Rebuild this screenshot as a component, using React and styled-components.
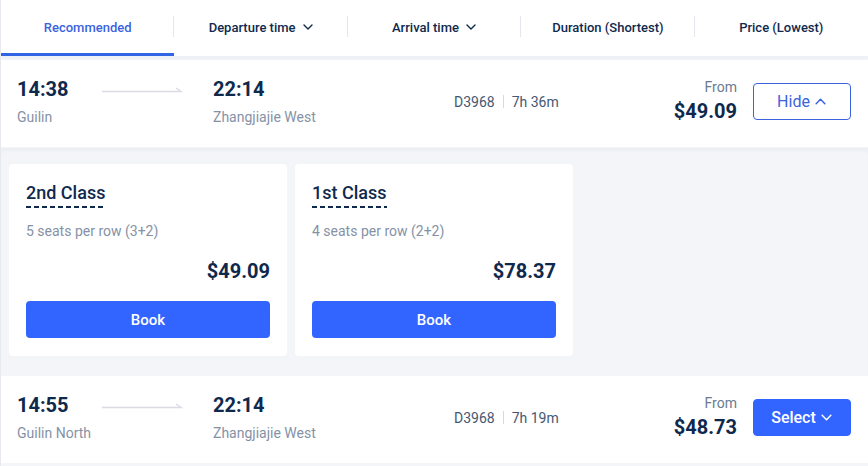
import React from "react";
import styled, { createGlobalStyle } from "styled-components";

const Global = createGlobalStyle`
  html, body { margin: 0; padding: 0; background: #f3f5f9; }
  body { font-family: Roboto, "Noto Sans", Arial, sans-serif; color: #0f294d; }
  * { box-sizing: border-box; }
`;

const Page = styled.div`
  width: 868px;
  height: 466px;
  background: #f3f5f9;
  border-left: 1px solid #e6e9ee;
  overflow: hidden;
`;

const Tabs = styled.div`
  display: grid;
  grid-template-columns: repeat(5, 1fr);
  height: 56px;
  background: #fff;
  box-shadow: 0 2px 4px rgba(15, 41, 77, 0.04);
`;

const Tab = styled.div`
  position: relative;
  display: flex;
  align-items: center;
  justify-content: center;
  gap: 6px;
  padding-top: 1px;
  font-size: 13px;
  font-weight: 500;
  color: ${(p) => (p.$active ? "#3b63dd" : "#0f294d")};
  border-bottom: 3px solid ${(p) => (p.$active ? "#3264e6" : "transparent")};
  &::after {
    content: "";
    display: ${(p) => (p.$last ? "none" : "block")};
    position: absolute;
    right: 0;
    top: 16px;
    height: 21px;
    width: 1px;
    background: #e4e7ec;
  }
`;

const Row = styled.div`
  display: flex;
  align-items: center;
  height: 87px;
  margin-top: ${(p) => p.$mt}px;
  background: #fff;
  padding: 0 17px 0 16px;
`;

const Point = styled.div`
  display: flex;
  flex-direction: column;
  gap: 7px;
  width: ${(p) => p.$w}px;
  white-space: nowrap;
  margin-top: -4px;
`;

const Time = styled.div`
  font-size: 20px;
  font-weight: 700;
  line-height: 24px;
  color: #0f294d;
`;

const Station = styled.div`
  font-size: 14px;
  line-height: 18px;
  color: #8592a6;
`;

const ArrowWrap = styled.div`
  width: 112px;
  margin-top: -30px;
  display: flex;
`;

const Info = styled.div`
  display: flex;
  align-items: center;
  gap: 8px;
  font-size: 14px;
  color: #455873;
  margin-left: 140px;
  margin-top: -4px;
  white-space: nowrap;
`;

const Sep = styled.span`
  width: 1px;
  height: 13px;
  background: #d5d9e0;
`;

const PriceBox = styled.div`
  margin-left: auto;
  display: flex;
  flex-direction: column;
  align-items: flex-end;
  margin-right: 16px;
  margin-top: -6px;
`;

const From = styled.div`
  font-size: 14px;
  line-height: 18px;
  color: #6b7a90;
`;

const BigPrice = styled.div`
  font-size: 20px;
  font-weight: 700;
  line-height: 26px;
  margin-top: 2px;
  color: #0f294d;
`;

const ActionBtn = styled.button`
  width: 98px;
  height: 37px;
  border-radius: 4px;
  font-family: inherit;
  font-size: 16px;
  font-weight: ${(p) => (p.$filled ? 500 : 400)};
  display: flex;
  align-items: center;
  justify-content: center;
  gap: 4px;
  cursor: pointer;
  border: 1px solid;
  background: ${(p) => (p.$filled ? "#3264ff" : "#fff")};
  color: ${(p) => (p.$filled ? "#fff" : "#3a63dd")};
  border-color: ${(p) => (p.$filled ? "#3264ff" : "#3a63dd")};
  margin-top: -4px;
`;

const Expand = styled.div`
  display: flex;
  gap: 8px;
  padding: 16px 8px 19px 8px;
  background: #f3f5f9;
  box-shadow: inset 0 4px 6px -4px rgba(15, 41, 77, 0.08);
  margin-top: 1px;
`;

const Card = styled.div`
  width: 278px;
  height: 192px;
  background: #fff;
  border-radius: 4px;
  padding: 18px 17px 18px 17px;
  display: flex;
  flex-direction: column;
`;

const ClassName = styled.div`
  align-self: flex-start;
  font-size: 18px;
  font-weight: 500;
  line-height: 22px;
  color: #0f294d;
  background-image: linear-gradient(to right, #0f294d 5px, transparent 5px);
  background-size: 8px 2px;
  background-repeat: repeat-x;
  background-position: left bottom;
  padding-bottom: 4px;
`;

const Seats = styled.div`
  margin-top: 14px;
  font-size: 14px;
  line-height: 18px;
  color: #8592a6;
`;

const CardPrice = styled.div`
  margin-top: 18px;
  text-align: right;
  font-size: 20px;
  font-weight: 700;
  line-height: 26px;
  color: #0f294d;
`;

const BookBtn = styled.button`
  margin-top: auto;
  height: 37px;
  width: 100%;
  border: none;
  border-radius: 4px;
  background: #3264ff;
  color: #fff;
  font-family: inherit;
  font-size: 15px;
  font-weight: 500;
  cursor: pointer;
`;

const Chevron = ({ up, color = "currentColor", size = 12 }) => (
  <svg width={size} height={size} viewBox="0 0 12 12" fill="none">
    <path
      d={up ? "M2 8 L6 4 L10 8" : "M2 4 L6 8 L10 4"}
      stroke={color}
      strokeWidth="1.4"
      strokeLinecap="round"
      strokeLinejoin="round"
    />
  </svg>
);

const Arrow = () => (
  <svg width="82" height="8" viewBox="0 0 82 8">
    <path d="M1 6.5 H80 L75 3" stroke="#d9dce2" strokeWidth="1.4" fill="none" />
  </svg>
);

const Trip = ({ dep, from, arr, to, train, dur, price, expanded, mt }) => (
  <Row $mt={mt}>
    <Point $w={84}>
      <Time>{dep}</Time>
      <Station>{from}</Station>
    </Point>
    <ArrowWrap>
      <Arrow />
    </ArrowWrap>
    <Point $w={101}>
      <Time>{arr}</Time>
      <Station>{to}</Station>
    </Point>
    <Info>
      <span>{train}</span>
      <Sep />
      <span>{dur}</span>
    </Info>
    <PriceBox>
      <From>From</From>
      <BigPrice>{price}</BigPrice>
    </PriceBox>
    {expanded ? (
      <ActionBtn>
        Hide <Chevron up size={13} />
      </ActionBtn>
    ) : (
      <ActionBtn $filled>
        Select <Chevron size={13} />
      </ActionBtn>
    )}
  </Row>
);

const tabs = [
  { label: "Recommended", active: true },
  { label: "Departure time", chevron: true },
  { label: "Arrival time", chevron: true },
  { label: "Duration (Shortest)" },
  { label: "Price (Lowest)", last: true },
];

const classes = [
  { name: "2nd Class", seats: "5 seats per row (3+2)", price: "$49.09" },
  { name: "1st Class", seats: "4 seats per row (2+2)", price: "$78.37" },
];

export default function App() {
  return (
    <Page>
      <Global />
      <Tabs>
        {tabs.map((t) => (
          <Tab key={t.label} $active={t.active} $last={t.last}>
            {t.label}
            {t.chevron && <Chevron color="#0f294d" size={12} />}
          </Tab>
        ))}
      </Tabs>
      <Trip
        mt={4}
        dep="14:38"
        from="Guilin"
        arr="22:14"
        to="Zhangjiajie West"
        train="D3968"
        dur="7h 36m"
        price="$49.09"
        expanded
      />
      <Expand>
        {classes.map((c) => (
          <Card key={c.name}>
            <ClassName>{c.name}</ClassName>
            <Seats>{c.seats}</Seats>
            <CardPrice>{c.price}</CardPrice>
            <BookBtn>Book</BookBtn>
          </Card>
        ))}
      </Expand>
      <Trip
        mt={1}
        dep="14:55"
        from="Guilin North"
        arr="22:14"
        to="Zhangjiajie West"
        train="D3968"
        dur="7h 19m"
        price="$48.73"
      />
    </Page>
  );
}
